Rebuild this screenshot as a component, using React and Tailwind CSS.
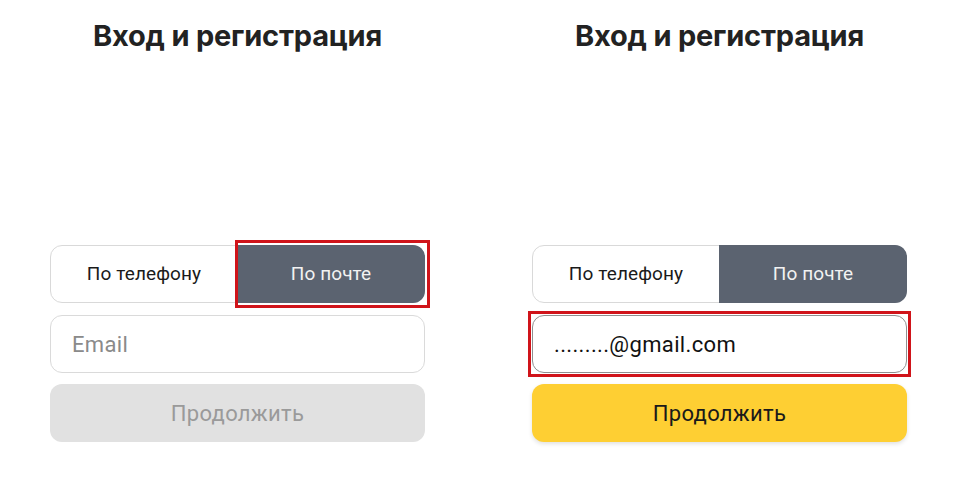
import React from 'react';

const panels = [
  { filled: false, highlight: 'tab' },
  { filled: true, highlight: 'input' },
];

function Panel({ filled, highlight }) {
  const input = (
    <div
      className={
        'h-[58px] flex items-center px-[21px] rounded-[12px] border text-[22px] tracking-[0.35px] ' +
        (filled ? 'border-[#8f8f8f] text-[#111]' : 'border-[#dadada] text-[#8a8a8a]')
      }
    >
      {filled ? '.........@gmail.com' : 'Email'}
    </div>
  );

  return (
    <div className="w-[375px] flex flex-col">
      <h1 className="h-[74px] pt-[18px] text-center text-[29px] font-bold leading-[36px] text-[#222] font-['Inter',sans-serif] tracking-[-0.2px]">
        Вход и регистрация
      </h1>

      <div className="mt-[171px] relative flex h-[58px] rounded-[12px] border border-[#d9d9d9] bg-white">
        <div className="flex-1 flex items-center justify-center text-[19px] text-[#1a1a1a] tracking-[0.1px]">
          По телефону
        </div>
        <div className="relative w-[188px] -my-px -mr-px flex items-center justify-center rounded-[12px] rounded-l-none bg-[#5b6370] text-[19px] text-[#f2f2f2] tracking-[0.1px]">
          По почте
          {highlight === 'tab' && (
            <div className="absolute pointer-events-none -left-[2px] -right-[5px] -top-[5px] -bottom-[5px] border-[3px] border-[#d0141a]" />
          )}
        </div>
      </div>

      {/* red annotation frame around the input */}
      {highlight === 'input' ? (
        <div className="mt-[8px] -mx-[4px] border-[3px] border-[#d0141a] p-px">{input}</div>
      ) : (
        <div className="mt-[12px] pb-[4px]">{input}</div>
      )}

      <div
        className={
          'mt-[7px] h-[58px] flex items-center justify-center rounded-[12px] text-[22px] tracking-[0.3px] ' +
          (filled ? 'bg-[#fecf33] text-[#1a1a1a] shadow-[0_2px_4px_rgba(0,0,0,0.12)]' : 'bg-[#e1e1e1] text-[#9a9a9a]')
        }
      >
        Продолжить
      </div>
    </div>
  );
}

export default function App() {
  return (
    <div className="w-[957px] h-[498px] bg-white flex gap-[107px] px-[50px] font-['Roboto',sans-serif]">
      {panels.map((p, i) => (
        <Panel key={i} {...p} />
      ))}
    </div>
  );
}
